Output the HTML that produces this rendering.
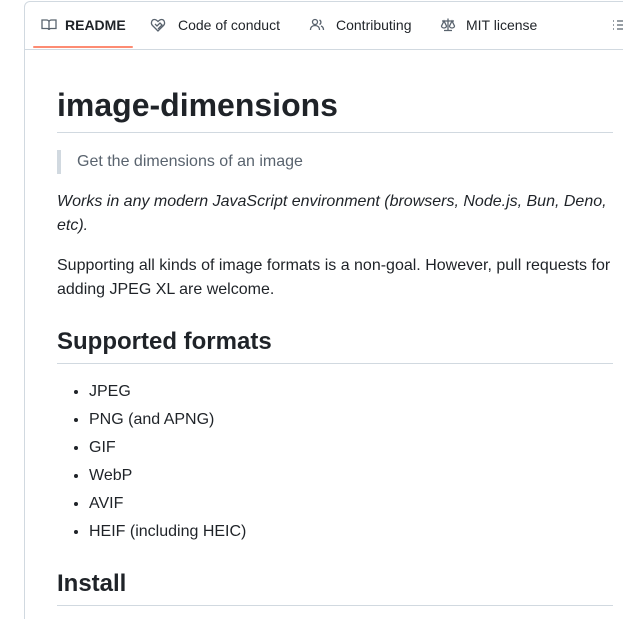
<!DOCTYPE html>
<html style="overflow:hidden;height:619px"><head><style>
body{margin:0;background:#fff;font-family:"Liberation Sans",sans-serif;color:#1f2328;width:623px;height:619px;overflow:hidden;position:relative}
.box{position:absolute;left:24px;top:1px;width:640px;height:640px;border:1px solid #d1d9e0;border-radius:6px;overflow:hidden}
.tabs{position:absolute;left:0;top:0;right:0;height:47px;border-bottom:1px solid #d1d9e0}
.tab{position:absolute;top:15px;font-size:14px;color:#1f2328;display:flex;align-items:center;gap:8px}
.tab svg{width:16px;height:16px;fill:none;stroke:#59636e;stroke-width:1.3}
.ul{position:absolute;left:8px;top:44px;width:100px;height:2px;background:#fd8c73;border-radius:2px}
.c{position:absolute;left:32px;top:0;width:556px}
h1{position:absolute;top:85px;margin:0;font-size:32px;font-weight:bold;line-height:36px}
.hr{position:absolute;left:0;width:556px;height:1px;background:#d1d9e0}
p,li{font-size:16px;line-height:24px;margin:0}
</style></head><body>
<div class="box">
<div class="tabs">
<div class="tab" style="left:16px;font-weight:bold"><svg viewBox="0 0 16 16"><path d="M1 3h4.5c1.2 0 2.5.8 2.5 2v8c0-1-1-1.5-2-1.5H1zM15 3h-4.5C9.3 3 8 3.8 8 5v8c0-1 1-1.5 2-1.5h5z"/></svg>README</div>
<div class="tab" style="left:125px;gap:12px"><svg viewBox="0 0 16 16"><path d="M8 14L2.5 8.5C0.5 6.5 1.5 2.5 4.5 2.5c1.5 0 2.5 1 3.5 2 1-1 2-2 3.5-2 3 0 4 4 2 6zM5 7l2 2 3-3 2 2-4 4"/></svg>Code of conduct</div>
<div class="tab" style="left:284px;gap:11px"><svg viewBox="0 0 16 16"><circle cx="6" cy="5" r="2.5"/><path d="M1.5 13c0-3 2-4.5 4.5-4.5s4.5 1.5 4.5 4.5M10.5 3a2.5 2.5 0 010 4.5M12 9c1.5.5 2.5 2 2.5 4"/></svg>Contributing</div>
<div class="tab" style="left:415px;gap:10px"><svg viewBox="0 0 16 16"><path d="M8 1.5v12M4 13.5h8M2 4h12M4 4L1.5 9a2.5 2 0 005 0zM12 4l-2.5 5a2.5 2 0 005 0z"/></svg>MIT license</div>
<div class="tab" style="left:586px"><svg viewBox="0 0 16 16"><path d="M2 4h1M2 8h1M2 12h1M6 4h8M6 8h8M6 12h8"/></svg></div>
<div class="ul"></div>
</div>
<div class="c">
<h1>image-dimensions</h1>
<div class="hr" style="top:130px"></div>
<div style="position:absolute;top:148px;left:0;width:4px;height:24px;background:#d1d9e0"></div>
<p style="position:absolute;top:148px;left:20px;color:#59636e">Get the dimensions of an image</p>
<p style="position:absolute;top:188px;font-style:italic">Works in any modern JavaScript environment (browsers, Node.js, Bun, Deno, etc).</p>
<p style="position:absolute;top:252px">Supporting all kinds of image formats is a non-goal. However, pull requests for adding JPEG XL are welcome.</p>
<h2 style="position:absolute;top:325px;margin:0;font-size:24px;line-height:30px">Supported formats</h2>
<div class="hr" style="top:361px"></div>
<ul style="position:absolute;top:378px;margin:0;padding-left:32px">
<li style="margin-bottom:4px">JPEG</li><li style="margin-bottom:4px">PNG (and APNG)</li><li style="margin-bottom:4px">GIF</li><li style="margin-bottom:4px">WebP</li><li style="margin-bottom:4px">AVIF</li><li>HEIF (including HEIC)</li></ul>
<h2 style="position:absolute;top:567px;margin:0;font-size:24px;line-height:30px">Install</h2>
<div class="hr" style="top:603px"></div>
</div>
</div>
</body></html>
